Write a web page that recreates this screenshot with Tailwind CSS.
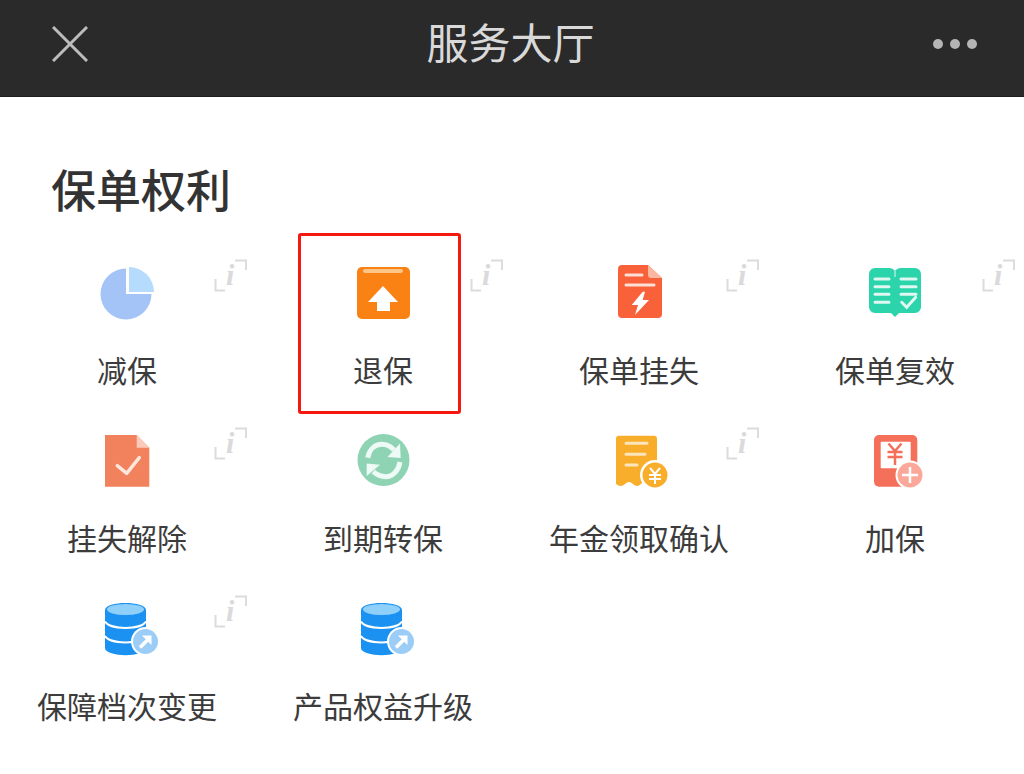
<!DOCTYPE html>
<html lang="zh-CN">
<head>
  <meta charset="UTF-8" />
  <meta name="viewport" content="width=device-width, initial-scale=1.0"/>
  <title>服务大厅</title>
  <script src="https://cdn.jsdelivr.net/npm/@tailwindcss/browser@4"></script>
</head>
<body class="bg-white h-[774px] overflow-hidden font-['Noto_Sans_CJK_SC','Noto_Sans',sans-serif]">

  <!-- Symbols used more than once -->
  <svg class="hidden" width="0" height="0">
    <symbol id="db" viewBox="0 0 64 64" overflow="visible">
      <path d="M9 13C9 3.500 50 3.500 50 13V51C50 60.500 9 60.500 9 51Z" fill="#1b92f2"/>
      <ellipse cx="29.500" cy="12.500" rx="18.500" ry="5.500" fill="#8fd0fb"/>
      <path d="M9 24.500C14 33 45 33 50 24.500M9 39C14 47.500 45 47.500 50 39" fill="none" stroke="#fff" stroke-width="2"/>
      <circle cx="49.500" cy="44.500" r="14.500" fill="#fff"/>
      <circle cx="49.500" cy="44.500" r="12.500" fill="#9ccdf6"/>
      <path d="M44 50.500L52 42.500" stroke="#fff" stroke-width="3.500"/>
      <path d="M46 38.500H55.500V48Z" fill="#fff"/>
    </symbol>
    <symbol id="info" viewBox="0 0 36 36" overflow="visible">
      <path d="M22 2.500H33V12M2.500 21V32.500H12" fill="none" stroke="#dcdcdc" stroke-width="2"/>
    </symbol>
  </svg>

  <!-- Title bar -->
  <header class="h-[97px] bg-[#2a2a2a] border-b border-[#1c1c1c] flex items-center justify-between pl-[52px] pr-[47px] pb-[9px]">
    <svg class="w-9 h-9" viewBox="0 0 36 36" fill="none" stroke="#bdbdbd" stroke-width="3"><path d="M1 1L35 35M35 1L1 35"/></svg>
    <h1 class="-mt-[6px] text-[42px] leading-none text-[#d9d9d9]">服务大厅</h1>
    <div class="w-11 flex justify-between">
      <span class="size-[10px] rounded-full bg-[#b5b5b5]"></span>
      <span class="size-[10px] rounded-full bg-[#b5b5b5]"></span>
      <span class="size-[10px] rounded-full bg-[#b5b5b5]"></span>
    </div>
  </header>

  <main>
    <h2 class="pl-[51px] pt-[64px] text-[45px] leading-[56px] font-medium text-[#333]">保单权利</h2>

    <div class="grid grid-cols-4 mt-[33px]">

      <!-- 减保 -->
      <div class="relative h-[168px] flex flex-col items-center pt-[11px]">
        <svg class="size-16 overflow-visible" viewBox="0 0 64 64">
          <path d="M30 7.500A25.500 25.500 0 1 0 55.500 33H30Z" fill="#a4c4f8"/>
          <path d="M33 6A25 25 0 0 1 58 31H33Z" fill="#b5dcfd"/>
        </svg>
        <p class="mt-[24px] pr-[2px] text-[30px] leading-10 text-[#3c3c3c]">减保</p>
        <div class="absolute left-[213px] top-[8px] size-9 text-[#dadada]">
          <svg class="size-9 absolute inset-0"><use href="#info"/></svg>
          <span class="absolute left-[13px] -top-px text-[30px] leading-9 font-bold italic font-['Liberation_Serif',serif]">i</span>
        </div>
      </div>

      <!-- 退保 -->
      <div class="relative h-[168px] flex flex-col items-center pt-[11px]">
        <svg class="size-16" viewBox="0 0 64 64">
          <rect x="5" y="6" width="53" height="52" rx="5" fill="#fa8114"/>
          <rect x="11" y="8" width="40" height="4" rx="2" fill="#fcc58a"/>
          <path d="M31 25L46 41H38V50H25V41H16Z" fill="#fff"/>
        </svg>
        <p class="mt-[24px] pr-[2px] text-[30px] leading-10 text-[#3c3c3c]">退保</p>
        <div class="absolute left-[213px] top-[8px] size-9 text-[#dadada]">
          <svg class="size-9 absolute inset-0"><use href="#info"/></svg>
          <span class="absolute left-[13px] -top-px text-[30px] leading-9 font-bold italic font-['Liberation_Serif',serif]">i</span>
        </div>
        <div class="absolute left-[42px] top-[-17px] w-[163px] h-[181px] border-[3px] border-[#f5180f] rounded-[3px]"></div>
      </div>

      <!-- 保单挂失 -->
      <div class="relative h-[168px] flex flex-col items-center pt-[11px]">
        <svg class="size-16" viewBox="0 0 64 64">
          <path d="M14 4H40L54 17V53A4 4 0 0 1 50 57H14A4 4 0 0 1 10 53V8A4 4 0 0 1 14 4Z" fill="#f8613a"/>
          <path d="M40 4L54 17H43A3 3 0 0 1 40 14Z" fill="#fbb8a0"/>
          <path d="M18 14H34M18 24H46" stroke="#fde0d5" stroke-width="3" stroke-linecap="round"/>
          <path d="M34.700 30.700L23.700 44H30L27 54L41 39H34.700L37 30.700Z" fill="#fff"/>
        </svg>
        <p class="mt-[24px] pr-[2px] text-[30px] leading-10 text-[#3c3c3c]">保单挂失</p>
        <div class="absolute left-[213px] top-[8px] size-9 text-[#dadada]">
          <svg class="size-9 absolute inset-0"><use href="#info"/></svg>
          <span class="absolute left-[13px] -top-px text-[30px] leading-9 font-bold italic font-['Liberation_Serif',serif]">i</span>
        </div>
      </div>

      <!-- 保单复效 -->
      <div class="relative h-[168px] flex flex-col items-center pt-[11px]">
        <svg class="size-16" viewBox="0 0 64 64">
          <path d="M11 7H25C28 7 30 8.500 31 10C32 8.500 34 7 37 7H51A6 6 0 0 1 57 13V46A6 6 0 0 1 51 52H35L31 56L27 52H11A6 6 0 0 1 5 46V13A6 6 0 0 1 11 7Z" fill="#2bd4ab"/>
          <path d="M31 10V16" stroke="#a5eedb" stroke-width="1.500"/>
          <path d="M11 18H25M11 25.700H25M11 33.300H25M11 41.300H25M37 18H52M37 25.700H52M37 33.300H52" stroke="#dff8f1" stroke-width="3" stroke-linecap="round"/>
          <path d="M37.700 41.300L42.700 46.300L51.700 36.300" fill="none" stroke="#dff8f1" stroke-width="3" stroke-linecap="round"/>
        </svg>
        <p class="mt-[24px] pr-[2px] text-[30px] leading-10 text-[#3c3c3c]">保单复效</p>
        <div class="absolute left-[213px] top-[8px] size-9 text-[#dadada]">
          <svg class="size-9 absolute inset-0"><use href="#info"/></svg>
          <span class="absolute left-[13px] -top-px text-[30px] leading-9 font-bold italic font-['Liberation_Serif',serif]">i</span>
        </div>
      </div>

      <!-- 挂失解除 -->
      <div class="relative h-[168px] flex flex-col items-center pt-[11px]">
        <svg class="size-16" viewBox="0 0 64 64">
          <path d="M9 6H40.700L53.300 18.700V57.700H9Z" fill="#f2825d"/>
          <path d="M40.700 6L53.300 18.700H40.700Z" fill="#fccabb"/>
          <path d="M21.300 36.700L30.700 44.300L43.300 28.700" fill="none" stroke="#fde6dc" stroke-width="3.500" stroke-linecap="round" stroke-linejoin="round"/>
        </svg>
        <p class="mt-[24px] pr-[2px] text-[30px] leading-10 text-[#3c3c3c]">挂失解除</p>
        <div class="absolute left-[213px] top-[8px] size-9 text-[#dadada]">
          <svg class="size-9 absolute inset-0"><use href="#info"/></svg>
          <span class="absolute left-[13px] -top-px text-[30px] leading-9 font-bold italic font-['Liberation_Serif',serif]">i</span>
        </div>
      </div>

      <!-- 到期转保 -->
      <div class="relative h-[168px] flex flex-col items-center pt-[11px]">
        <svg class="size-16" viewBox="0 0 64 64">
          <circle cx="31.500" cy="31" r="26" fill="#8fd3b5"/>
          <path d="M15.700 28.700C17.500 20 23 15.300 30 15.300C35 15.300 39 17.500 42 21" fill="none" stroke="#eefaf5" stroke-width="5"/>
          <path d="M48 14.500L48.700 29L35.500 28Z" fill="#eefaf5"/>
          <path d="M48 33C46.500 42 40.500 47.700 33.500 47.700C28.500 47.700 24.500 45.500 21.300 42.700" fill="none" stroke="#eefaf5" stroke-width="5"/>
          <path d="M14.700 34.500L14.700 47L28 35.800Z" fill="#eefaf5"/>
        </svg>
        <p class="mt-[24px] pr-[2px] text-[30px] leading-10 text-[#3c3c3c]">到期转保</p>
      </div>

      <!-- 年金领取确认 -->
      <div class="relative h-[168px] flex flex-col items-center pt-[11px]">
        <svg class="size-16 overflow-visible" viewBox="0 0 64 64">
          <path d="M11 6.700H46A3 3 0 0 1 49 9.700V50H38L33 55Q29 59 25 55Q21 51 17 55Q13 59 8 55V9.700A3 3 0 0 1 11 6.700Z" fill="#f9ae2b"/>
          <path d="M18 14.300H39M18 25.300H37M18 36H29" stroke="#fde6bd" stroke-width="3" stroke-linecap="round"/>
          <circle cx="47" cy="46" r="15" fill="#fff"/>
          <circle cx="47" cy="46" r="12.500" fill="#f9ae2b"/>
          <path d="M42 39L47 45L52 39M41 46H53M41 50H53M47 45V55" fill="none" stroke="#fff" stroke-width="2"/>
        </svg>
        <p class="mt-[24px] pr-[2px] text-[30px] leading-10 text-[#3c3c3c]">年金领取确认</p>
        <div class="absolute left-[213px] top-[8px] size-9 text-[#dadada]">
          <svg class="size-9 absolute inset-0"><use href="#info"/></svg>
          <span class="absolute left-[13px] -top-px text-[30px] leading-9 font-bold italic font-['Liberation_Serif',serif]">i</span>
        </div>
      </div>

      <!-- 加保 -->
      <div class="relative h-[168px] flex flex-col items-center pt-[11px]">
        <svg class="size-16 overflow-visible" viewBox="0 0 64 64">
          <rect x="10" y="6" width="43.300" height="51.700" rx="5" fill="#f5705a"/>
          <rect x="16.700" y="12.700" width="30" height="26.600" rx="1" fill="#fff"/>
          <path d="M24.500 14.500L31 22L37.500 14.500M23.500 23H38.500M23.500 28H38.500M31 22V36" fill="none" stroke="#f5705a" stroke-width="2.500"/>
          <circle cx="46" cy="46" r="14.500" fill="#fff"/>
          <circle cx="46" cy="46" r="12.500" fill="#fba89a"/>
          <path d="M46 38V54M38 46H54" stroke="#fff" stroke-width="2.500"/>
        </svg>
        <p class="mt-[24px] pr-[2px] text-[30px] leading-10 text-[#3c3c3c]">加保</p>
      </div>

      <!-- 保障档次变更 -->
      <div class="relative h-[168px] flex flex-col items-center pt-[11px]">
        <svg class="size-16 overflow-visible"><use href="#db"/></svg>
        <p class="mt-[24px] pr-[2px] text-[30px] leading-10 text-[#3c3c3c]">保障档次变更</p>
        <div class="absolute left-[213px] top-[8px] size-9 text-[#dadada]">
          <svg class="size-9 absolute inset-0"><use href="#info"/></svg>
          <span class="absolute left-[13px] -top-px text-[30px] leading-9 font-bold italic font-['Liberation_Serif',serif]">i</span>
        </div>
      </div>

      <!-- 产品权益升级 -->
      <div class="relative h-[168px] flex flex-col items-center pt-[11px]">
        <svg class="size-16 overflow-visible"><use href="#db"/></svg>
        <p class="mt-[24px] pr-[2px] text-[30px] leading-10 text-[#3c3c3c]">产品权益升级</p>
      </div>

    </div>
  </main>
</body>
</html>
